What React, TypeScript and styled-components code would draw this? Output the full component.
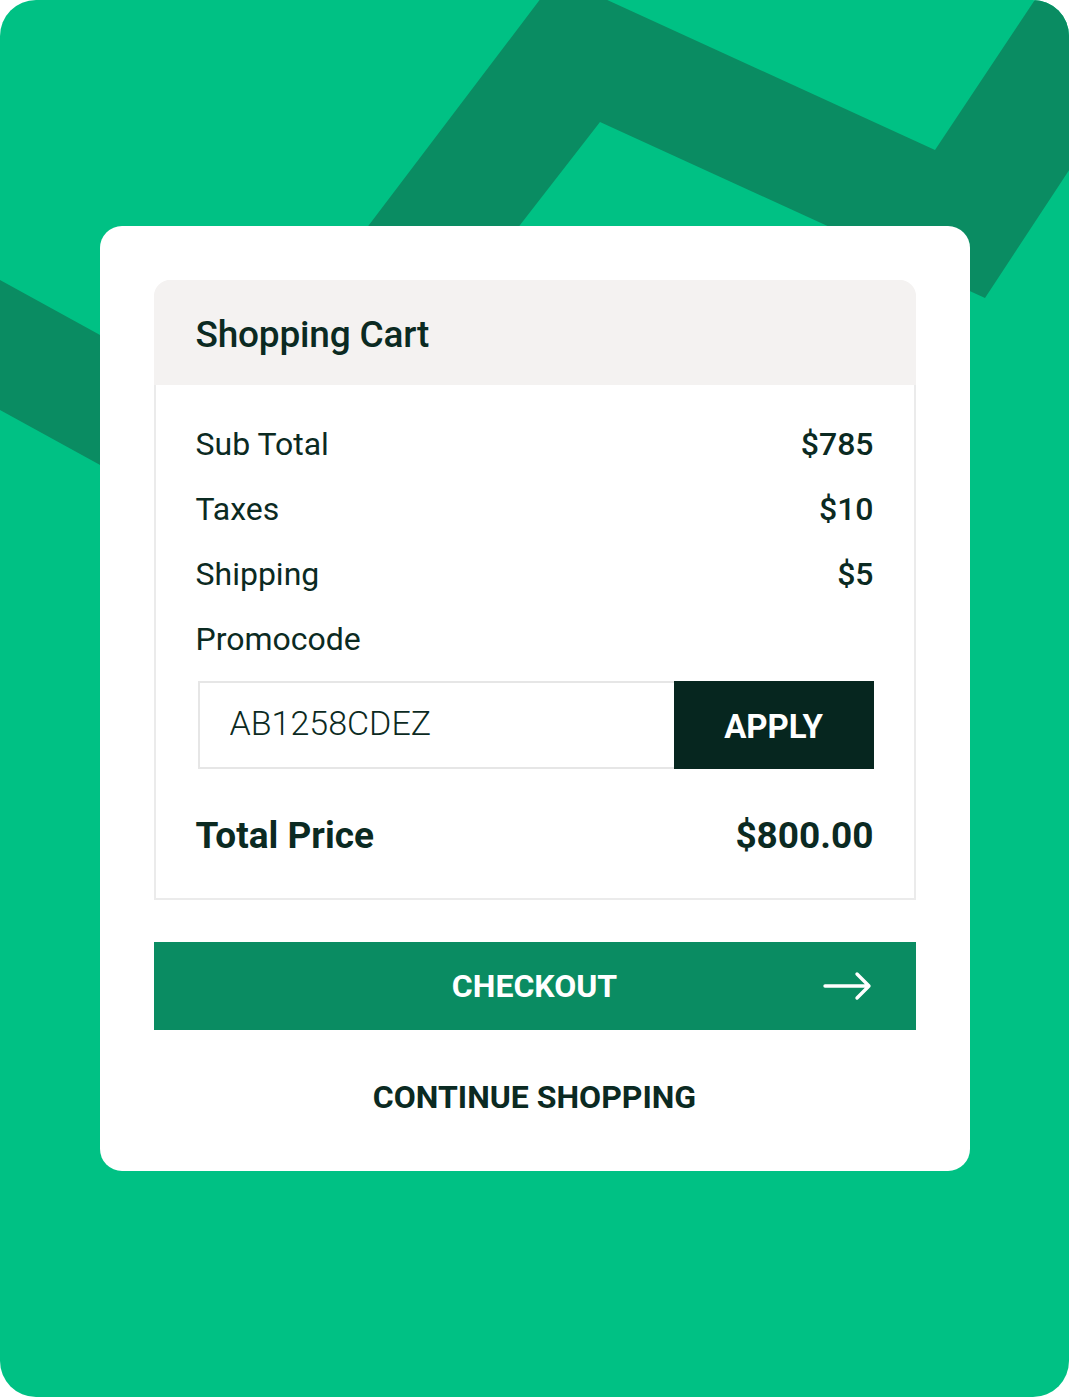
import React, { useState } from "react";
import styled, { createGlobalStyle } from "styled-components";

const GlobalStyle = createGlobalStyle`
  html, body {
    margin: 0;
    padding: 0;
    background: #ffffff;
  }
  body {
    font-family: Roboto, "Open Sans", sans-serif;
    color: #0b2a22;
  }
  * {
    box-sizing: border-box;
  }
`;

const Panel = styled.div`
  position: relative;
  width: 1069px;
  height: 1397px;
  border-radius: 36px;
  background: #00c184;
  overflow: hidden;
  display: flex;
  align-items: flex-start;
  justify-content: center;
  padding-top: 226px;
`;

const Zigzag = styled.svg`
  position: absolute;
  inset: 0;
  width: 100%;
  height: 100%;
`;

const Card = styled.div`
  position: relative;
  width: 870px;
  background: #ffffff;
  border-radius: 22px;
  padding: 54px 54px 55px;
  display: flex;
  flex-direction: column;
`;

const CartBox = styled.div`
  display: flex;
  flex-direction: column;
  border: 2px solid #ebebeb;
  border-radius: 18px 18px 0 0;
`;

const CartHeader = styled.div`
  background: #f4f2f1;
  border-radius: 16px 16px 0 0;
  height: 105px;
  margin: -2px -2px 0;
  padding: 4px 42px 0;
  display: flex;
  align-items: center;
`;

const Title = styled.h1`
  margin: 0;
  font-size: 37px;
  font-weight: 500;
  letter-spacing: -0.2px;
  color: #0b2a22;
`;

const CartBody = styled.div`
  padding: 26px 40px 30px 40px;
  display: flex;
  flex-direction: column;
`;

const Row = styled.div<{ $bold?: boolean }>`
  display: flex;
  justify-content: space-between;
  align-items: center;
  height: 65px;
  font-size: ${(p) => (p.$bold ? "37px" : "32px")};
  font-weight: ${(p) => (p.$bold ? 700 : 400)};
  color: #0b2a22;
`;

const Value = styled.span`
  font-weight: 500;
`;

const PromoForm = styled.form`
  display: flex;
  height: 88px;
  margin: 10px 0 34px 2px;
`;

const PromoInput = styled.input`
  flex: 1;
  min-width: 0;
  border: 2px solid #e6e6e6;
  border-right: none;
  padding: 0 30px;
  font-family: Roboto, sans-serif;
  font-size: 34px;
  font-weight: 300;
  color: #0b2a22;
  outline: none;
  padding-bottom: 4px;
`;

const ApplyButton = styled.button`
  width: 200px;
  border: none;
  background: #06261f;
  color: #ffffff;
  font-family: Roboto, sans-serif;
  font-size: 33px;
  font-weight: 700;
  cursor: pointer;
  padding-top: 4px;
`;

const CheckoutButton = styled.button`
  position: relative;
  margin-top: 42px;
  height: 88px;
  border: none;
  background: #0a8c62;
  color: #ffffff;
  font-family: Roboto, sans-serif;
  font-size: 32px;
  font-weight: 700;
  display: flex;
  align-items: center;
  justify-content: center;
  cursor: pointer;
`;

const ArrowIcon = styled.svg`
  position: absolute;
  right: 43px;
  top: 50%;
  transform: translateY(-50%);
`;

const LinkButton = styled.button`
  margin-top: 48px;
  border: none;
  background: none;
  color: #0b2a22;
  font-family: Roboto, sans-serif;
  font-size: 32px;
  font-weight: 700;
  cursor: pointer;
  align-self: center;
  padding: 0;
`;

const rows = [
  { label: "Sub Total", value: "$785" },
  { label: "Taxes", value: "$10" },
  { label: "Shipping", value: "$5" },
];

function App() {
  const [code, setCode] = useState("AB1258CDEZ");

  return (
    <>
      <GlobalStyle />
      <Panel>
        <Zigzag viewBox="0 0 1069 1397" preserveAspectRatio="none">
          <polygon
            fill="#0a8c62"
            points="-20,269 231,407 557,-23 935,150 1100,-98 1100,123 985,298 600,122 264,555 -20,399"
          />
        </Zigzag>
        <Card>
          <CartBox>
            <CartHeader>
              <Title>Shopping Cart</Title>
            </CartHeader>
            <CartBody>
              {rows.map((r) => (
                <Row key={r.label}>
                  <span>{r.label}</span>
                  <Value>{r.value}</Value>
                </Row>
              ))}
              <Row>
                <span>Promocode</span>
              </Row>
              <PromoForm onSubmit={(e) => e.preventDefault()}>
                <PromoInput
                  type="text"
                  value={code}
                  onChange={(e) => setCode(e.currentTarget.value)}
                />
                <ApplyButton type="submit">APPLY</ApplyButton>
              </PromoForm>
              <Row $bold>
                <span>Total Price</span>
                <span>$800.00</span>
              </Row>
            </CartBody>
          </CartBox>
          <CheckoutButton>
            CHECKOUT
            <ArrowIcon width="50" height="30" viewBox="0 0 50 30" fill="none">
              <path
                d="M2 15 H46 M34 3 L46 15 L34 27"
                stroke="#ffffff"
                strokeWidth="3.4"
                strokeLinecap="round"
                strokeLinejoin="round"
              />
            </ArrowIcon>
          </CheckoutButton>
          <LinkButton>CONTINUE SHOPPING</LinkButton>
        </Card>
      </Panel>
    </>
  );
}

export default App;
